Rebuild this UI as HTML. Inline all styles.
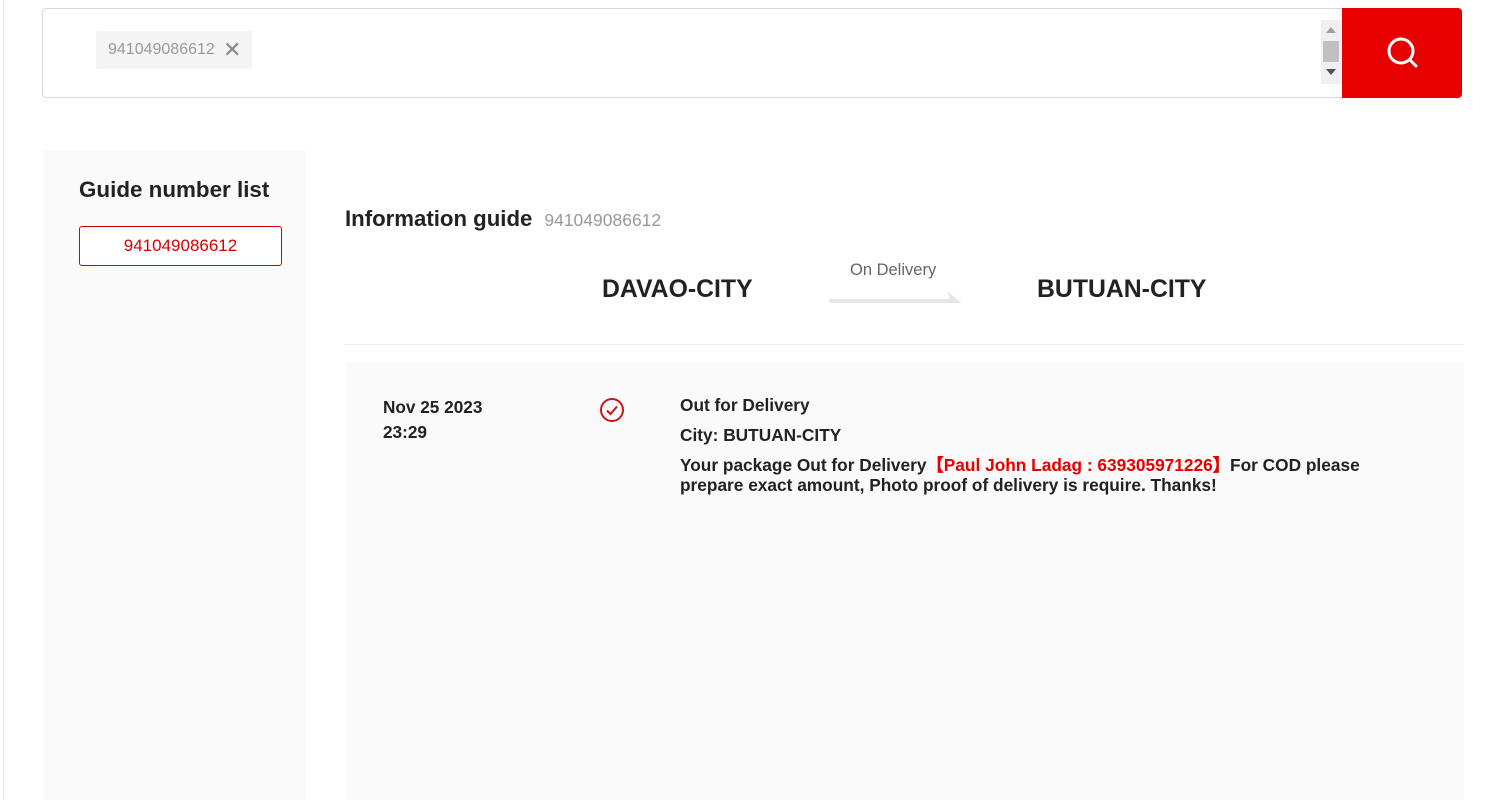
<!DOCTYPE html>
<html><head><meta charset="utf-8"><style>
*{box-sizing:border-box;margin:0;padding:0}
body{width:1492px;height:800px;overflow:hidden;background:#fff;font-family:"Liberation Sans",Arial,sans-serif;position:relative;color:#222}
.edge{position:absolute;left:3px;top:0;width:1px;height:800px;background:#e8e8e8}
.search{position:absolute;left:42px;top:8px;width:1420px;height:90px;border:1px solid #d9d9d9;border-radius:4px;background:#fff}
.tag{position:absolute;left:96px;top:31px;width:156px;height:38px;background:#f5f5f5;border-radius:2px;color:#999;font-size:16px;line-height:38px;padding-left:12px}
.tag span{position:absolute;left:127px;top:0;font-size:22px;color:#888}
.sb{position:absolute;left:1321px;top:20px;width:20px;height:64px;background:#f0f0f0}
.sb .th{position:absolute;left:2px;top:21px;width:16px;height:21px;background:#c0c0c0}
.btn{position:absolute;left:1342px;top:8px;width:120px;height:90px;background:#e60000;border-radius:0 4px 4px 0}
.left{position:absolute;left:44px;top:150px;width:262px;height:650px;background:#fafafa}
.left h2{position:absolute;left:35px;top:27px;font-size:22.4px;font-weight:bold;color:#222;white-space:nowrap}
.left .num{position:absolute;left:35px;top:76px;width:203px;height:40px;border:1px solid #d40000;border-radius:3px;color:#d40000;font-size:17px;text-align:center;line-height:38px;background:#fff}
.ig{position:absolute;left:345px;top:206px;font-size:22.2px;font-weight:bold;white-space:nowrap}
.ig span{font-size:17.5px;color:#999;font-weight:normal;margin-left:12px}
.city{position:absolute;top:276px;font-size:24.8px;font-weight:bold;color:#222}
.ond{position:absolute;left:850px;top:261px;font-size:16.5px;color:#666}
.hr{position:absolute;left:344px;top:344px;width:1120px;height:1px;background:#eee}
.det{position:absolute;left:346px;top:362px;width:1118px;height:438px;background:#fafafa}
.d1{position:absolute;left:383px;top:395px;font-size:17.2px;font-weight:bold;line-height:25px}
.t{position:absolute;left:680px;font-size:17.3px;font-weight:bold;color:#222}
.r{color:#e60000}
</style></head><body>
<div class="edge"></div>
<div class="search">
</div>
<div class="tag">941049086612<span>✕</span></div>
<div class="sb"><div class="th"></div>
<svg style="position:absolute;left:5px;top:7px" width="10" height="6"><path d="M0 6L5 0L10 6Z" fill="#a0a0a0"/></svg>
<svg style="position:absolute;left:5px;top:49px" width="10" height="6"><path d="M0 0L5 6L10 0Z" fill="#505050"/></svg>
</div>
<div class="btn"><svg style="position:absolute;left:43px;top:27px" width="36" height="36" viewBox="0 0 36 36"><circle cx="16" cy="16" r="12" fill="none" stroke="#fff" stroke-width="3"/><path d="M25 25L31 31" stroke="#fff" stroke-width="3" stroke-linecap="round"/></svg></div>
<div class="left"><h2>Guide number list</h2><div class="num">941049086612</div></div>
<div class="ig">Information guide<span>941049086612</span></div>
<div class="city" style="left:602px">DAVAO-CITY</div>
<div class="ond">On Delivery</div>
<svg style="position:absolute;left:829px;top:290px" width="134" height="14"><path d="M0 9H121L118 1L133 13H0Z" fill="#e6e6e6"/></svg>
<div class="city" style="left:1037px">BUTUAN-CITY</div>
<div class="hr"></div>
<div class="det"></div>
<div class="d1">Nov 25 2023<br>23:29</div>
<svg style="position:absolute;left:599px;top:397px" width="26" height="26" viewBox="0 0 26 26"><circle cx="13" cy="13" r="11" fill="none" stroke="#c8161d" stroke-width="2"/><path d="M8 13.5L11.5 17L18 9.5" fill="none" stroke="#c8161d" stroke-width="2"/></svg>
<div class="t" style="top:395px">Out for Delivery</div>
<div class="t" style="top:425px">City: BUTUAN-CITY</div>
<div class="t" style="top:455px;width:720px;line-height:20px">Your package Out for Delivery<span class="r">【Paul John Ladag : 639305971226】</span>For COD please prepare exact amount, Photo proof of delivery is require. Thanks!</div>
</body></html>
